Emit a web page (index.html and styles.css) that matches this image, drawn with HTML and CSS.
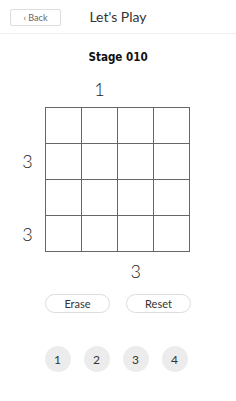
FILE: index.html
```html
<!DOCTYPE html>
<html lang="en">
<head>
    <meta charset="UTF-8">
    <meta name="viewport" content="width=device-width, initial-scale=1.0">
    <title>Let's Play</title>
    <link rel="stylesheet" href="styles.css">
</head>
<body>
    <div class="play-header">
        <button class="back-button">&#8249; Back</button>
        <h1 class="play-title">Let's Play</h1>
    </div>

    <h2 class="stage-title"><span>Stage 010</span></h2>

    <div class="puzzle">
        <div class="clue clue-top" style="grid-column: 3; grid-row: 1">1</div>
        <div class="clue clue-left" style="grid-column: 1; grid-row: 3">3</div>
        <div class="clue clue-left" style="grid-column: 1; grid-row: 5">3</div>
        <div class="board" id="board"></div>
        <div class="clue clue-bottom" style="grid-column: 4; grid-row: 6">3</div>
    </div>

    <div class="controls">
        <button class="pill-button">Erase</button>
        <button class="pill-button">Reset</button>
    </div>

    <div class="number-pad">
        <button class="number-button">1</button>
        <button class="number-button">2</button>
        <button class="number-button">3</button>
        <button class="number-button">4</button>
    </div>

    <script>
        // Build the 4x4 board
        const board = document.getElementById('board');
        for (let i = 0; i < 16; i++) {
            const cell = document.createElement('div');
            cell.className = 'cell';
            board.appendChild(cell);
        }
    </script>
</body>
</html>
```

FILE: styles.css
```css
body {
    font-family: Lato, 'Noto Sans', sans-serif;
    margin: 0;
    padding: 0;
    background: white;
    color: #222;
}

.play-header {
    position: relative;
    height: 33px;
    border-bottom: 1px solid #eee;
    display: flex;
    align-items: center;
    justify-content: center;
}

.back-button {
    position: absolute;
    left: 10px;
    top: 9px;
    width: 51px;
    height: 17px;
    padding: 0;
    background: white;
    border: 1px solid #ddd;
    border-radius: 2px;
    color: #666;
    font-family: Lato, sans-serif;
    font-size: 9px;
}

.play-title {
    margin: 0;
    font-size: 14px;
    font-weight: 400;
    color: #333;
}

.stage-title {
    margin: 15px 0 0 0;
    text-align: center;
    font-family: 'Liberation Sans Narrow', 'DejaVu Sans', sans-serif;
    font-size: 13px;
    font-weight: 700;
    color: #111;
}

.stage-title span {
    display: inline-block;
    transform: scaleX(0.8);
}

.puzzle {
    display: grid;
    grid-template-columns: 45px repeat(4, 36.25px) 1fr;
    grid-template-rows: 33px repeat(4, 36.25px) 36px;
    margin-top: 10px;
}

.board {
    grid-column: 2 / 6;
    grid-row: 2 / 6;
    display: grid;
    grid-template-columns: repeat(4, 1fr);
    grid-template-rows: repeat(4, 1fr);
    border-top: 1px solid #666;
    border-left: 1px solid #666;
}

.cell {
    border-right: 1px solid #666;
    border-bottom: 1px solid #666;
}

.clue {
    display: flex;
    align-items: center;
    justify-content: center;
    font-size: 18px;
    font-weight: 300;
    color: #222;
}

.clue-top {
    align-items: flex-end;
    padding-bottom: 7px;
}

.clue-left {
    padding-left: 10px;
}

.clue-bottom {
    padding-top: 2px;
}

.controls {
    display: flex;
    justify-content: center;
    gap: 16px;
    margin-top: 6px;
}

.pill-button {
    width: 65px;
    height: 19px;
    padding: 0;
    background: white;
    border: 1px solid #ddd;
    border-radius: 10px;
    font-family: Lato, sans-serif;
    font-size: 11px;
    color: #333;
}

.number-pad {
    display: flex;
    justify-content: center;
    gap: 13px;
    margin-top: 33px;
    padding-right: 4px;
}

.number-button {
    width: 26px;
    height: 26px;
    padding: 0;
    border: none;
    border-radius: 50%;
    background: #ececec;
    font-family: Lato, sans-serif;
    font-size: 12px;
    color: #333;
}
```
